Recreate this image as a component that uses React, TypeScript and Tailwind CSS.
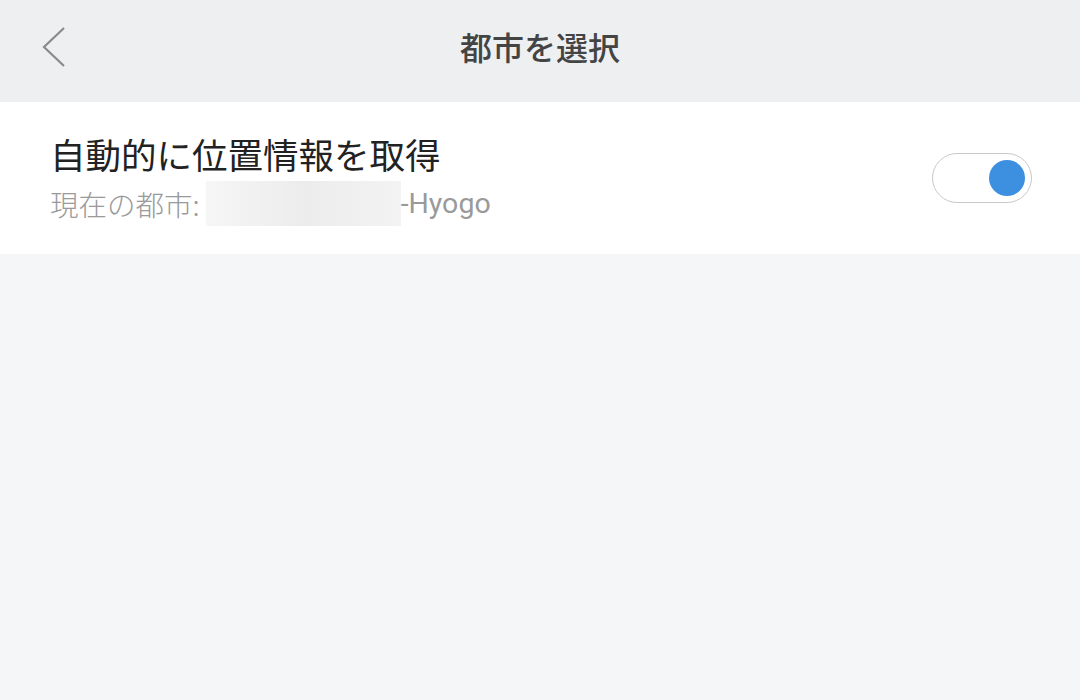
const font = { fontFamily: '"Noto Sans CJK JP", "Noto Sans", sans-serif' }

function Toggle({ on }: { on: boolean }) {
	return (
		<div className="flex h-[50px] w-[100px] items-center justify-end rounded-full border border-[#c8c8c8] bg-white px-[6px]">
			{on && <div className="h-[36px] w-[36px] rounded-full bg-[#3d8fe0]" />}
		</div>
	)
}

export default function App() {
	return (
		<div className="flex h-[700px] w-[1080px] flex-col bg-[#f5f6f8]" style={font}>
			<header className="relative flex h-[102px] items-center justify-center bg-[#eeeff1] pb-[10px]">
				<button type="button" className="absolute left-[40px] top-[26px]">
					<svg width="28" height="42" viewBox="0 0 28 42" fill="none">
						<polyline points="24,2 4,21 24,40" stroke="#8a8a8a" strokeWidth="2.2" strokeLinejoin="miter" />
					</svg>
				</button>
				<span className="text-[32px] font-medium text-[#444444]">都市を選択</span>
			</header>

			<section className="flex h-[152px] items-center justify-between bg-white pl-[50px] pr-[48px]">
				<div className="flex flex-col">
					<p className="text-[35.5px] leading-[48px] text-[#222222]">自動的に位置情報を取得</p>
					<div className="mt-[3px] flex items-center text-[28.5px] leading-[44px] text-[#9a9a9a]">
						<span className="font-light">現在の都市:</span>
						<span className="ml-[6px] h-[45px] w-[195px] bg-gradient-to-r from-[#f6f6f6] via-[#ececec] to-[#f3f3f3]" />
						<span style={{ fontFamily: '"Roboto", "Noto Sans", sans-serif' }}>-Hyogo</span>
					</div>
				</div>
				<Toggle on />
			</section>
		</div>
	)
}
